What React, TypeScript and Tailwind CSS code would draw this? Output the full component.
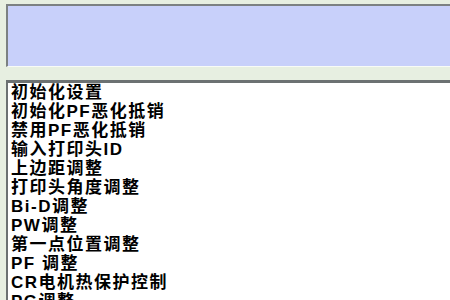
const items = [
  "初始化设置",
  "初始化PF恶化抵销",
  "禁用PF恶化抵销",
  "输入打印头ID",
  "上边距调整",
  "打印头角度调整",
  "Bi-D调整",
  "PW调整",
  "第一点位置调整",
  "PF 调整",
  "CR电机热保护控制",
  "PG调整",
];

export default function App() {
  return (
    <div className="h-[300px] w-[450px] overflow-hidden bg-[#e7efe1] pt-[4px] pl-[6px]">
      {/* message panel */}
      <div className="h-[63px] border-t-2 border-l-2 border-b border-[#7c8182] border-b-[#f8fbf6] bg-[#c8d0fa]" />

      {/* function list */}
      <div className="mt-[13px] h-[240px] border-t-[3px] border-l-2 border-[#6c7172] bg-white pl-[3px]">
        <ul
          className="font-bold text-[17px] leading-[19px] tracking-[1.5px] text-black"
          style={{ fontFamily: '"Liberation Sans", "Noto Sans CJK SC", sans-serif' }}
        >
          {items.map((t) => (
            <li key={t} className="whitespace-nowrap">
              {t}
            </li>
          ))}
        </ul>
      </div>
    </div>
  );
}
